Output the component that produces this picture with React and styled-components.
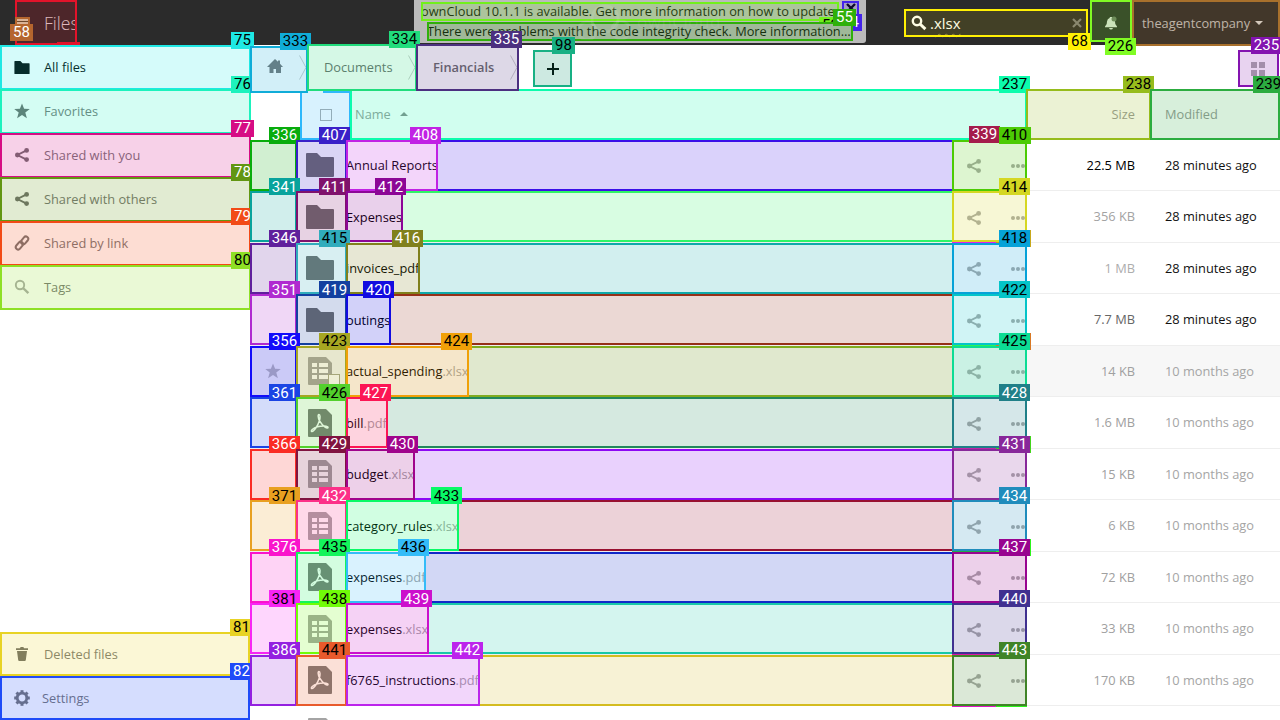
import React from "react";
import styled, { createGlobalStyle, css } from "styled-components";

const Global = createGlobalStyle`
  *, *::before, *::after { box-sizing: border-box; }
  body { margin: 0; background: #fff; font-family: "Open Sans", sans-serif; font-size: 12.8px; color: #000; }
`;

/* ---------- annotation frame and number tag ---------- */

const Frame = styled.div`
  position: relative;
  isolation: isolate;
  flex: none;
  background: ${(p) => p.$base || "#fff"};
  &::after {
    content: "";
    position: absolute;
    inset: 0;
    border: 2px solid ${(p) => p.$c};
    background: color-mix(in srgb, ${(p) => p.$c} ${(p) => p.$tint || 19}%, transparent);
    background-clip: padding-box;
    pointer-events: none;
  }
`;

const Tag = styled.span`
  position: absolute;
  z-index: 1;
  top: ${(p) => p.$top ?? -13}px;
  right: ${(p) => p.$right ?? -3}px;
  height: 17px;
  width: ${(p) => (p.$short ? 23 : 31)}px;
  text-align: center;
  background: ${(p) => p.$c};
  color: ${(p) => (p.$dark ? "#000" : "#fff")};
  font: 15px/16px Roboto, sans-serif;
  white-space: nowrap;
  ${(p) => p.$edge && css`box-shadow: 1px 0 0 ${p.$edge};`}
`;

/* ---------- page ---------- */

const Page = styled.div`
  width: 1280px;
  height: 720px;
  overflow: hidden;
  display: flex;
  flex-direction: column;
`;

const Header = styled.header`
  flex: none;
  height: 45px;
  background: #2b2b2b;
  display: flex;
  align-items: flex-start;
`;

const TitleFrame = styled(Frame)`
  width: 62px;
  height: 45px;
  margin-left: 15px;
  display: flex;
`;

const TitleText = styled.span`
  width: 32px;
  margin-left: 14px;
  overflow: hidden;
  font-size: 17.6px;
  font-weight: 300;
  line-height: 46px;
  color: #ddd;
`;

const MenuFrame = styled(Frame)`
  width: 15px;
  height: 15px;
  margin-top: 17px;
  z-index: 2;
`;

const Bars = styled.div`
  margin: 2px 2px 0;
  height: 5px;
  border-top: 2px solid #fff;
  border-bottom: 2px solid #fff;
`;

const TitleStub = styled.span`
  position: absolute;
  z-index: 1;
  left: 42px;
  bottom: 0;
  width: 23px;
  height: 3px;
  background: #e3132a;
`;

const Notice = styled.div`
  position: relative;
  width: 452px;
  height: 43px;
  margin-left: 337px;
  padding: 1px 7px 0;
  background: #bbb;
  border-radius: 0 0 3px 3px;
  color: #111;
  line-height: 18px;
`;

const Watermark = styled.div`
  position: absolute;
  left: 155px;
  top: 4px;
  display: flex;
  align-items: center;
  color: rgba(255, 255, 255, 0.09);
  font-size: 17px;
  letter-spacing: 0.5px;
  z-index: 1;
`;

const NoticeLine = styled.div`
  display: flex;
  align-items: flex-start;
`;

const NoticeText = styled(Frame)`
  width: ${(p) => p.$w}px;
  height: 19px;
  margin-top: 1px;
  margin-left: ${(p) => p.$ml || 0}px;
  white-space: nowrap;
`;

const NoticeLabel = styled.span`
  display: block;
  overflow: hidden;
  line-height: 19px;
`;

const CloseFrame = styled(Frame)`
  width: 17px;
  height: 19px;
  margin-left: 3px;
  display: flex;
  justify-content: center;
  padding-top: 2px;
`;

const SearchFrame = styled(Frame)`
  width: 184px;
  height: 28px;
  margin: 9px 0 0 38px;
  padding: 0 6px 0 7px;
  display: flex;
  align-items: center;
  z-index: 1;
  svg { flex: none; }
`;

const SearchText = styled.span`
  flex: 1;
  margin-left: 3px;
  font-size: 15px;
  line-height: 26px;
  color: #fff;
`;

const Misspelt = styled.span`
  text-decoration: underline wavy #8a7f45 1px;
  text-underline-offset: 4px;
`;

const BellFrame = styled(Frame)`
  width: 42px;
  height: 42px;
  margin-left: 2px;
  display: flex;
  align-items: center;
  justify-content: center;
  z-index: 2;
`;

const UserFrame = styled(Frame)`
  width: 148px;
  height: 46px;
  display: flex;
  align-items: center;
  padding-left: 10px;
  color: #c3c3c3;
`;

const Caret = styled.span`
  border: 4px solid transparent;
  border-top-color: ${(p) => (p.$up ? "transparent" : "#ddd")};
  border-bottom-color: ${(p) => (p.$up ? "#8b8b8b" : "transparent")};
  margin: ${(p) => (p.$up ? "-3px 0 0 9px" : "4px 0 0 5px")};
`;

const Body = styled.div`
  flex: 1;
  min-height: 0;
  display: flex;
`;

/* ---------- sidebar ---------- */

const Sidebar = styled.nav`
  flex: none;
  width: 250px;
  display: flex;
  flex-direction: column;
  justify-content: space-between;
`;

const NavGroup = styled.div`
  display: flex;
  flex-direction: column;
`;

const NavItem = styled(Frame)`
  width: ${(p) => (p.$narrow ? 250 : 251)}px;
  height: ${(p) => (p.$narrow ? 44 : 45)}px;
  margin-bottom: ${(p) => (p.$narrow ? 0 : -1)}px;
  padding: 0 0 ${(p) => (p.$narrow ? 0 : 1)}px 14px;
  display: flex;
  align-items: center;
  color: ${(p) => (p.$active ? "#000" : "#777")};
  svg { flex: none; }
`;

const NavText = styled.span`
  margin-left: ${(p) => (p.$tight ? 12 : 14)}px;
  line-height: 18px;
`;

/* ---------- main ---------- */

const Main = styled.main`
  position: relative;
  flex: 1;
  min-width: 0;
`;

const Controls = styled.div`
  height: 44px;
  display: flex;
  align-items: flex-start;
`;

const Crumb = styled(Frame)`
  z-index: 2;
  width: ${(p) => p.$w}px;
  height: 47px;
  margin: ${(p) => p.$mt}px -1px 0 0;
  padding: 0 0 ${(p) => p.$pb}px 17px;
  display: flex;
  align-items: center;
  color: #6b6b6b;
  font-weight: ${(p) => (p.$bold ? 600 : 400)};
  & > svg:last-of-type { position: absolute; right: 1px; top: ${(p) => 10 - p.$mt}px; }
`;

const AddFrame = styled(Frame)`
  width: 39px;
  height: 37px;
  margin: 5px 0 0 15px;
  display: flex;
  align-items: center;
  justify-content: center;
`;

const GridFrame = styled(Frame)`
  width: 41px;
  height: 37px;
  margin: 5px 1px 0 auto;
  display: flex;
  align-items: center;
  justify-content: center;
`;

const Tiles = styled.div`
  display: grid;
  grid-template-columns: 6px 6px;
  grid-auto-rows: 6px;
  gap: 2px;
  margin-left: -1px;
  i { background: #aaa; }
`;

const TableHead = styled.div`
  height: 51px;
  padding-left: 50px;
  display: flex;
  color: #999;
`;

const HeadCell = styled(Frame)`
  width: ${(p) => p.$w}px;
  height: 51px;
  margin-right: -1px;
  padding: 0 ${(p) => (p.$end ? 16 : 0)}px ${(p) => p.$pb ?? 2}px ${(p) => p.$pl || 0}px;
  display: flex;
  align-items: center;
  justify-content: ${(p) => (p.$end ? "flex-end" : "flex-start")};
`;

const HeadStub = styled.span`
  position: absolute;
  z-index: 1;
  left: 23px;
  top: 2px;
  width: 28px;
  height: 2px;
  background: #2eb8fb;
`;

const Check = styled.span`
  width: 12px;
  height: 12px;
  border: 1px solid ${(p) => (p.$small ? "#a5a58e" : "#aaa")};
  background: #fff;
  ${(p) => p.$small && css`position: absolute; left: 32px; top: 28px;`}
`;

const Rows = styled.div`
  margin-top: -0.5px;
`;

const Row = styled.div`
  isolation: isolate;
  position: relative;
  height: 51.5px;
  display: flex;
  align-items: flex-start;
  border-bottom: 1px solid #eee;
  background: ${(p) => (p.$hover ? "#f7f7f7" : "transparent")};
  &:nth-child(even) ${Tag} { line-height: 18px; }
`;

const StarCell = styled(Frame)`
  width: 47px;
  height: 51px;
  margin-right: -1px;
  padding-right: 1px;
  display: flex;
  align-items: center;
  justify-content: center;
`;

const ThumbCell = styled(Frame)`
  width: 51px;
  height: 51px;
  margin-right: -1px;
  display: flex;
  align-items: center;
  justify-content: center;
  padding-right: 3px;
`;

const NameCell = styled(Frame)`
  z-index: 1;
  width: ${(p) => p.$w}px;
  height: 51px;
  margin-right: -2px;
  display: flex;
  align-items: center;
`;

const NameText = styled.span`
  overflow: hidden;
  white-space: nowrap;
  line-height: 20px;
`;

const Ext = styled.span`
  color: #a3a3a3;
`;

const RestCell = styled(Frame)`
  flex: 1;
  height: 51px;
  margin-right: -2px;
`;

const ActionCell = styled(Frame)`
  width: 75px;
  height: 51px;
  padding: 2px 2px 0 14px;
  display: flex;
  align-items: center;
  justify-content: space-between;
  ${(p) => p.$under && css`
    &::before {
      content: "";
      position: absolute;
      left: 0;
      right: 0;
      bottom: -1px;
      height: 1px;
      background: linear-gradient(90deg, ${p.$under[0]} 44px, ${p.$under[1]} 44px);
    }
  `}
`;

const SizeCell = styled.div`
  flex: none;
  width: 123px;
  padding-right: 15px;
  text-align: right;
  line-height: 50.5px;
  color: ${(p) => p.$tone};
`;

const DateCell = styled.div`
  flex: none;
  width: 130px;
  padding-left: 15px;
  line-height: 50.5px;
  color: ${(p) => p.$tone};
`;

const PlainThumb = styled.div`
  margin: 12px 0 0 58px;
`;

/* ---------- icons ---------- */

const Folder = ({ w = 28, h = 24, color = "#6e6e6e" }) => (
  <svg width={w} height={h} viewBox="0 0 28 24" fill={color}>
    <path d="M1 0h10l4 4h12q1 0 1 1v18q0 1-1 1H1q-1 0-1-1V1q0-1 1-1z" />
  </svg>
);

const Star = ({ color = "#6c6c6c", size = 16 }) => (
  <svg width={size} height={size} viewBox="0 0 16 16" fill={color}>
    <path d="M8 .4l2.1 5.3 5.7.2-4.5 3.6 1.6 5.7L8 12l-4.9 3.2 1.6-5.7L.2 5.9l5.7-.2z" />
  </svg>
);

const Share = ({ color = "#707070" }) => (
  <svg width="16" height="16" viewBox="0 0 16 16" fill={color}>
    <path d="M12.6 3.4L3.4 8l9.2 4.6" fill="none" stroke={color} strokeWidth="1.9" />
    <circle cx="12.6" cy="3.4" r="2.4" />
    <circle cx="12.6" cy="12.6" r="2.4" />
    <circle cx="3.4" cy="8" r="2.4" />
  </svg>
);

const Link = () => (
  <svg width="16" height="16" viewBox="0 0 16 16" fill="none" stroke="#777" strokeWidth="2">
    <rect x="-4.3" y="-2.4" width="8.6" height="4.8" rx="2.4" transform="translate(10.6 5.4) rotate(-50)" />
    <rect x="-4.3" y="-2.4" width="8.6" height="4.8" rx="2.4" transform="translate(5.4 10.6) rotate(-50)" />
  </svg>
);

const Lens = ({ color = "#aaa", bold }) => (
  <svg width="16" height="16" viewBox="0 0 16 16" fill="none" stroke={color}>
    <circle cx="6" cy="6" r="4.2" strokeWidth={bold ? 2.4 : 1.9} />
    <path d="M9 9l5.4 5.2" strokeWidth={bold ? 3 : 2.4} />
  </svg>
);

const Trash = () => (
  <svg width="16" height="16" viewBox="0 0 16 16" fill="#6a6a6a">
    <path d="M2 2.2h4L6.6 1h2.8L10 2.2h4V4H2zM3 5h10l-1.2 9q-.1 1-1 1H5.2q-.9 0-1-1z" />
  </svg>
);

const Gear = () => (
  <svg width="16" height="16" viewBox="0 0 16 16">
    <circle cx="8" cy="8" r="4.8" fill="none" stroke="#777" strokeWidth="2.8" />
    {[0, 45, 90, 135, 180, 225, 270, 315].map((a) => (
      <rect key={a} x="6.5" y="0.2" width="3" height="3" fill="#777" transform={`rotate(${a} 8 8)`} />
    ))}
  </svg>
);

const Home = () => (
  <svg width="16" height="16" viewBox="0 0 16 16" fill="#777">
    <path d="M8 1l3 2.8V2.500h2v3.200L16 9h-2v6H9v-4H6.500v4H2.500V9H0z" />
  </svg>
);

const Chevron = () => (
  <svg width="8" height="25" viewBox="0 0 8 25" fill="none" stroke="#ccc">
    <path d="M.5.5L7 12.500.5 24.500" />
  </svg>
);

const BellSvg = styled.svg`
  margin-top: 4px;
`;

const Bell = () => (
  <BellSvg width="14" height="14" viewBox="0 0 14 14" fill="#ddd">
    <path d="M6 1h2l.4 1q2.300.7 2.600 3.500l.3 2.500L13 10.500v.8H1v-.8L2.700 8 3 5.500Q3.300 2.700 5.600 2zM5 12h4q-.5 1.500-2 1.500T5 12z" />
    <circle cx="10" cy="3" r="2.500" fill="#6a7466" />
  </BellSvg>
);

const Cross = ({ size, color, width }) => (
  <svg width={size} height={size} viewBox="0 0 10 10" stroke={color} strokeWidth={width}>
    <path d="M1 1l8 8M9 1l-8 8" />
  </svg>
);

const Plus = () => (
  <svg width="12" height="12" viewBox="0 0 12 12" stroke="#000" strokeWidth="2">
    <path d="M6 0v12M0 6h12" />
  </svg>
);

const Dots = () => (
  <svg width="14" height="4" viewBox="0 0 14 4" fill="#aaa">
    <circle cx="2" cy="2" r="2" />
    <circle cx="7" cy="2" r="2" />
    <circle cx="12" cy="2" r="2" />
  </svg>
);

const Sheet = () => (
  <svg width="24" height="28" viewBox="0 0 24 28">
    <path d="M1 0h17l6 6v21q0 1-1 1H1q-1 0-1-1V1q0-1 1-1z" fill="#a4a4a4" />
    <path d="M4 6h5v4H4zM11 6h9v4h-9zM4 12h5v4H4zM11 12h9v4h-9zM4 18h5v4H4zM11 18h9v4h-9z" fill="#fff" />
  </svg>
);

const Pdf = () => (
  <svg width="24" height="28" viewBox="0 0 24 28">
    <path d="M1 0h17l6 6v21q0 1-1 1H1q-1 0-1-1V1q0-1 1-1z" fill="#7a7a7a" />
    <path
      d="M11 5.500c-1.400 0-.8 3.500.4 6.200C10 16 6.500 22.500 4 22.500c-2 0 .8-3.600 5.500-4.800 4-1 10.500-1.200 10.500.8 0 1.600-5-.6-8.600-6.800C12.300 9 12.300 5.500 11 5.500z"
      fill="none"
      stroke="#fff"
      strokeWidth="1.500"
    />
  </svg>
);

const Cloud = () => (
  <svg width="68" height="36" viewBox="0 0 68 36" fill="none" stroke="currentColor" strokeWidth="3">
    <circle cx="36" cy="15" r="13" />
    <circle cx="18" cy="27" r="9" />
    <circle cx="52" cy="26" r="9" />
  </svg>
);

/* ---------- data ---------- */

const NAV = [
  { n: 75, c: "#1ee8e4", dark: true, text: "All files", icon: <Folder w={16} h={13} color="#000" />, active: true },
  { n: 76, c: "#1df2bd", dark: true, text: "Favorites", icon: <Star /> },
  { n: 77, c: "#d60c84", text: "Shared with you", icon: <Share /> },
  { n: 78, c: "#629612", text: "Shared with others", icon: <Share /> },
  { n: 79, c: "#f24a16", text: "Shared by link", icon: <Link /> },
  { n: 80, c: "#8ee025", dark: true, text: "Tags", icon: <Lens /> },
];

const NAV_BOTTOM = [
  { n: 81, c: "#e8d324", dark: true, text: "Deleted files", icon: <Trash /> },
  { n: 82, c: "#1f4bf8", text: "Settings", icon: <Gear />, tight: true },
];

const OLD = "28 minutes ago";
const OLDER = "10 months ago";

// star, thumb, label and act hold [number, colour, dark text]
const FILES = [
  { kind: "dir", name: "Annual Reports", w: 92, star: [336, "#08ac0c", 1], thumb: [407, "#3a20c8"], label: [408, "#c122e4"], rest: "#3a10e8", act: [410, "#4ccb04", 1], share: [339, "#a41c4c"], edge: "#4ccb04", size: "22.5 MB", tone: "#000", date: OLD },
  { kind: "dir", name: "Expenses", w: 57, star: [341, "#08a39c"], thumb: [411, "#80126c"], label: [412, "#8c0696"], rest: "#2ff566", act: [414, "#d5d722", 1], under: ["#dc20ee", "#c89a28"], size: "356 KB", tone: "#a3a3a3", date: OLD },
  { kind: "dir", name: "invoices_pdf", w: 74, star: [346, "#60209c"], thumb: [415, "#30acbc", 1], label: [416, "#80801c"], rest: "#10a8a8", act: [418, "#06a2d8", 1], edge: "#c8a81c", size: "1 MB", tone: "#adadad", date: OLD },
  { kind: "dir", name: "outings", w: 45, star: [351, "#b02ad0"], thumb: [419, "#1340a0"], label: [420, "#120be0"], rest: "#963018", act: [422, "#04c4c8", 1], under: ["#2cf452", "#d87824"], size: "7.7 MB", tone: "#666", date: OLD },
  { kind: "sheet", name: "actual_spending", ext: ".xlsx", w: 123, hover: true, star: [356, "#120cfa"], thumb: [423, "#a6a622", 1], label: [424, "#f0a008", 1], rest: "#80ac20", act: [425, "#0cdc94", 1], edge: "#d87824", size: "14 KB", tone: "#a0a0a0", date: OLDER },
  { kind: "pdf", name: "bill", ext: ".pdf", w: 42, star: [361, "#1a44e4"], thumb: [426, "#52d02c", 1], label: [427, "#fc1654"], rest: "#20885c", act: [428, "#208088"], under: ["#c028a8", "#44d41c"], size: "1.6 MB", tone: "#a0a0a0", date: OLDER },
  { kind: "sheet", name: "budget", ext: ".xlsx", w: 69, star: [366, "#fa2c24"], thumb: [429, "#801440"], label: [430, "#a0048c"], rest: "#8c08f4", act: [431, "#88289a"], edge: "#44d41c", size: "15 KB", tone: "#a0a0a0", date: OLDER },
  { kind: "sheet", name: "category_rules", ext: ".xlsx", w: 113, star: [371, "#e8a020", 1], thumb: [432, "#fc3088"], label: [433, "#08fa66", 1], rest: "#981030", act: [434, "#208cbc"], under: ["#20a848", "#2cf41c"], size: "6 KB", tone: "#a3a3a3", date: OLDER },
  { kind: "pdf", name: "expenses", ext: ".pdf", w: 80, star: [376, "#fa14cc"], thumb: [435, "#14f45c", 1], label: [436, "#34bcf8", 1], rest: "#1028c8", act: [437, "#980490"], edge: "#2cf41c", size: "72 KB", tone: "#a0a0a0", date: OLDER },
  { kind: "sheet", name: "expenses", ext: ".xlsx", w: 83, star: [381, "#f824f4", 1], thumb: [438, "#70fc08", 1], label: [439, "#cc10cc"], rest: "#18c8a8", act: [440, "#403090"], under: ["#e018a4", "#2cf41c"], size: "33 KB", tone: "#a0a0a0", date: OLDER },
  { kind: "pdf", name: "f6765_instructions", ext: ".pdf", w: 134, star: [386, "#9420e0"], thumb: [441, "#e85a2c", 1], label: [442, "#bc24ec"], rest: "#d4bc20", act: [443, "#408428"], under: ["#e018c8", "#2cf41c"], size: "170 KB", tone: "#a0a0a0", date: OLDER },
];

FILES[0].star[2] = 0;

const THUMBS = { dir: <Folder />, sheet: <Sheet />, pdf: <Pdf /> };

const NavEntry = ({ item, narrow }) => (
  <NavItem $c={item.c} $active={item.active} $narrow={narrow}>
    {item.icon}
    <NavText $tight={item.tight}>{item.text}</NavText>
    <Tag $c={item.c} $dark={item.dark} $short>{item.n}</Tag>
  </NavItem>
);

const FileRow = ({ f }) => {
  const base = f.hover ? "#f7f7f7" : "#fff";
  return (
    <Row $hover={f.hover}>
      <StarCell $c={f.star[1]} $base={base}>
        {f.hover && <Star color="#bbb" />}
        <Tag $c={f.star[1]} $dark={f.star[2]}>{f.star[0]}</Tag>
      </StarCell>
      <ThumbCell $c={f.thumb[1]} $base={base}>
        {THUMBS[f.kind]}
        {f.hover && <Check $small />}
        <Tag $c={f.thumb[1]} $dark={f.thumb[2]}>{f.thumb[0]}</Tag>
      </ThumbCell>
      <NameCell $c={f.label[1]} $w={f.w} $base={base}>
        <NameText>{f.name}<Ext>{f.ext}</Ext></NameText>
        <Tag $c={f.label[1]} $dark={f.label[2]}>{f.label[0]}</Tag>
      </NameCell>
      <RestCell $c={f.rest} $base={base} />
      <ActionCell $c={f.act[1]} $base={base} $under={f.under}>
        <Share color="#aaa" />
        <Dots />
        {f.share && <Tag $c={f.share[1]} $top={-14} $right={27}>{f.share[0]}</Tag>}
        <Tag $c={f.act[1]} $dark={f.act[2]} $edge={f.edge}>{f.act[0]}</Tag>
      </ActionCell>
      <SizeCell $tone={f.tone}>{f.size}</SizeCell>
      <DateCell $tone={f.date === OLD ? "#111" : "#a5a5a5"}>{f.date}</DateCell>
    </Row>
  );
};

export default function App() {
  return (
    <Page>
      <Global />
      <Header>
        <TitleFrame $c="#e3132a" $base="#2b2b2b">
          <MenuFrame $c="#b5652e" $base="#2b2b2b" $tint={50}>
            <Bars />
            <Tag $c="#b5652e" $short $top={7}>58</Tag>
          </MenuFrame>
          <TitleText>Files</TitleText>
          <TitleStub />
        </TitleFrame>
        <Notice>
          <NoticeLine>
            <NoticeText $c="#72f01c" $base="#bbb" $w={418}>
              <NoticeLabel>ownCloud 10.1.1 is available. Get more information on how to update.</NoticeLabel>
              <Tag $c="#72f01c" $dark $short $top={15}>53</Tag>
            </NoticeText>
            <CloseFrame $c="#4424ea" $base="#bbb">
              <Cross size={10} color="#000" width={2.4} />
              <Tag $c="#4424ea" $short $top={13}>54</Tag>
            </CloseFrame>
          </NoticeLine>
          <NoticeText $c="#2fb00a" $base="#bbb" $w={426} $ml={6}>
            <NoticeLabel>There were problems with the code integrity check. More information…</NoticeLabel>
            <Tag $c="#2fb00a" $short $top={-13}>55</Tag>
          </NoticeText>
          <Watermark><Cloud />ownCloud</Watermark>
        </Notice>
        <SearchFrame $c="#fff004" $base="#2b2b2b" $tint={11}>
          <Lens color="#fff" bold />
          <SearchText>.<Misspelt>xlsx</Misspelt></SearchText>
          <Cross size={10} color="#7c7c7c" width={2.2} />
          <Tag $c="#fff004" $dark $short $top={24}>68</Tag>
        </SearchFrame>
        <BellFrame $c="#80fc24" $base="#2b2b2b">
          <Bell />
          <Tag $c="#80fc24" $dark $top={38} $right={-4}>226</Tag>
        </BellFrame>
        <UserFrame $c="#a8702c" $base="#2b2b2b">
          theagentcompany
          <Caret />
        </UserFrame>
      </Header>
      <Body>
        <Sidebar>
          <NavGroup>{NAV.map((i) => <NavEntry key={i.n} item={i} />)}</NavGroup>
          <NavGroup>{NAV_BOTTOM.map((i) => <NavEntry key={i.n} item={i} narrow />)}</NavGroup>
        </Sidebar>
        <Main>
          <Controls>
            <Crumb $c="#10acd8" $w={58} $mt={1} $pb={7}>
              <Home />
              <Chevron />
              <Tag $c="#10acd8" $dark>333</Tag>
            </Crumb>
            <Crumb $c="#20dc7c" $w={110} $mt={-1} $pb={2}>
              Documents
              <Chevron />
              <Tag $c="#20dc7c" $dark>334</Tag>
            </Crumb>
            <Crumb $c="#4c3080" $w={103} $mt={-1} $pb={2} $bold>
              Financials
              <Chevron />
              <Tag $c="#4c3080">335</Tag>
            </Crumb>
            <AddFrame $c="#18b084" $base="#f7f7f7">
              <Plus />
              <Tag $c="#18b084" $dark $short>98</Tag>
            </AddFrame>
            <GridFrame $c="#8414b0">
              <Tiles><i /><i /><i /><i /></Tiles>
              <Tag $c="#8414b0">235</Tag>
            </GridFrame>
          </Controls>
          <TableHead>
            <HeadCell $c="#2eb8fb" $w={51} $pl={20} $pb={0}>
              <Check />
              <HeadStub />
            </HeadCell>
            <HeadCell $c="#0cfcac" $w={677} $pl={5}>
              Name
              <Caret $up />
              <Tag $c="#0cfcac" $dark>237</Tag>
            </HeadCell>
            <HeadCell $c="#96bc1c" $w={125} $end>
              Size
              <Tag $c="#96bc1c" $dark>238</Tag>
            </HeadCell>
            <HeadCell $c="#2cac40" $w={130} $pl={15}>
              Modified
              <Tag $c="#2cac40" $dark $right={-4}>239</Tag>
            </HeadCell>
          </TableHead>
          <Rows>
            {FILES.map((f) => <FileRow key={f.star[0]} f={f} />)}
            <Row><PlainThumb><Sheet /></PlainThumb></Row>
          </Rows>
        </Main>
      </Body>
    </Page>
  );
}
